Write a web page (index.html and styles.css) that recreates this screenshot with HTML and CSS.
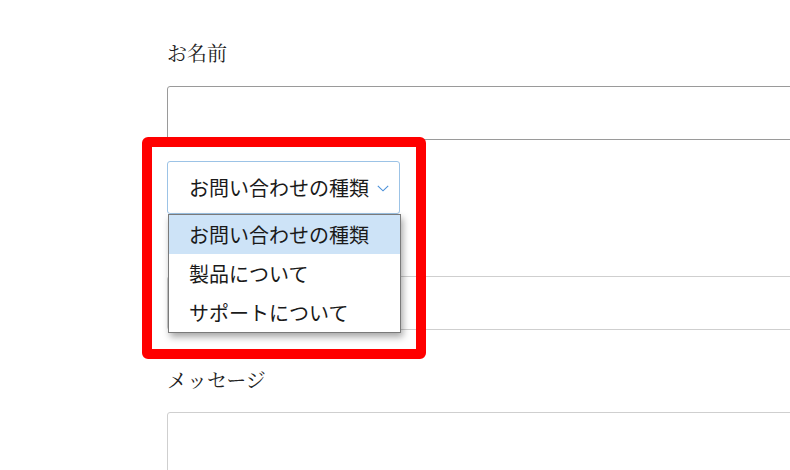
FILE: index.html
```html
<!DOCTYPE html>
<html lang="ja">
<head>
<meta charset="utf-8">
<link rel="stylesheet" href="styles.css">
</head>
<body>
<form class="form">
  <div class="field field-name">
    <label class="label">お名前</label>
    <div class="input input-dark"></div>
  </div>
  <div class="field field-select">
    <div class="select">
      <span class="select-text">お問い合わせの種類</span>
      <svg class="chevron" width="12" height="7" viewBox="0 0 12 7"><polyline points="0.8,0.8 6,5.8 11.2,0.8" fill="none" stroke="#4a90d9" stroke-width="1.1"/></svg>
    </div>
    <ul class="dropdown">
      <li class="option option-active">お問い合わせの種類</li>
      <li class="option">製品について</li>
      <li class="option">サポートについて</li>
    </ul>
    <div class="highlight"></div>
  </div>
  <div class="field field-mail">
    <div class="label label-covered"></div>
    <div class="input"></div>
  </div>
  <div class="field field-msg">
    <label class="label">メッセージ</label>
    <div class="input textarea"></div>
  </div>
</form>
</body>
</html>
```
FILE: styles.css
```css
html, body {
  margin: 0;
  padding: 0;
  overflow: hidden;
  background: #fff;
  width: 790px;
  height: 470px;
}
.form {
  padding: 39px 0 0 167px;
  display: flex;
  flex-direction: column;
  font-family: "Noto Serif CJK JP", "Liberation Serif", "Noto Sans CJK JP", serif;
}
.field {
  display: flex;
  flex-direction: column;
}
.label {
  font-size: 20px;
  line-height: 28px;
  height: 28px;
  color: #222;
  margin-bottom: 19px;
}
.input {
  width: 640px;
  height: 52px;
  border: 1px solid #cfcfcf;
  border-radius: 3px;
  background: #fff;
}
.input-dark {
  border-color: #9a9a9a;
}
.textarea {
  height: 80px;
}
.field-select {
  position: relative;
  margin-top: 21px;
  width: 233px;
}
.field-mail {
  margin-top: 15px;
}
.field-msg {
  margin-top: 36px;
}
.field-msg .label {
  margin-bottom: 18px;
}
.select {
  box-sizing: border-box;
  width: 233px;
  height: 53px;
  border: 1px solid #9cc3e6;
  border-radius: 3px;
  display: flex;
  align-items: center;
  gap: 8px;
  padding-left: 21px;
  font-family: "Noto Sans CJK JP", sans-serif;
  font-size: 20px;
  color: #1a1a1a;
  background: #fff;
}
.chevron {
  margin-top: 2px;
}
.dropdown {
  position: absolute;
  top: 53px;
  left: 1px;
  width: 231px;
  margin: 0;
  padding: 0;
  list-style: none;
  border: 1px solid #7a7a7a;
  background: #fff;
  box-shadow: 2px 4px 7px rgba(0, 0, 0, 0.35);
  font-family: "Noto Sans CJK JP", sans-serif;
  font-size: 20px;
  color: #1a1a1a;
  z-index: 2;
}
.option {
  height: 39px;
  line-height: 39px;
  padding-left: 20px;
  white-space: nowrap;
}
.option-active {
  background: #cde3f7;
}
.highlight {
  position: absolute;
  top: -24px;
  left: -25px;
  width: 264px;
  height: 202px;
  border: 10px solid #ff0000;
  border-radius: 6px;
  z-index: 3;
  pointer-events: none;
}
```
